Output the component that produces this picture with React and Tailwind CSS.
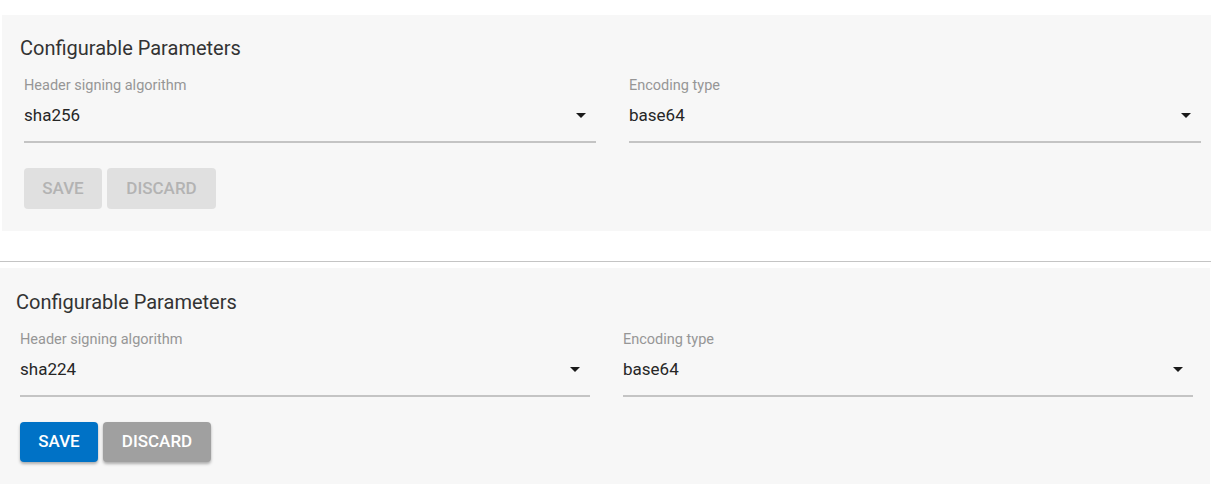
import React from 'react';

function Arrow() {
    return (
        <svg width="10" height="5" viewBox="0 0 10 5" className="mr-[10px] shrink-0">
            <path d="M0 0h10L5 5z" fill="#1a1a1a" />
        </svg>
    );
}

function SelectField({ label, value, width }) {
    return (
        <div className={`flex flex-col ${width}`}>
            <span className="text-[14.5px] leading-[20px] text-[#969696]">{label}</span>
            <div className="mt-[7px] flex items-center justify-between pb-[14px] border-b-2 border-[#c4c4c4]">
                <span className="text-[17px] leading-[24px] text-[#262626]">{value}</span>
                <Arrow />
            </div>
        </div>
    );
}

function Panel({ algo, active, className, titlePad, bodyPad, fieldW }) {
    return (
        <div className={`bg-[#f7f7f7] pb-[22px] ${className}`}>
            <h2 className={`${titlePad} text-[20px] leading-[24px] text-[#333333] font-normal`}>
                Configurable Parameters
            </h2>
            <div className={bodyPad}>
                <div className="mt-[16px] flex gap-[33px]">
                    <SelectField label="Header signing algorithm" value={algo} width={fieldW} />
                    <SelectField label="Encoding type" value="base64" width={fieldW} />
                </div>
                <div className="mt-[25px] flex gap-[5px]">
                    {active ? (
                        <>
                            <button className="h-[40px] w-[78px] rounded-[4px] bg-[#0072c6] text-white text-[17px] font-medium uppercase shadow-[0_2px_3px_rgba(0,0,0,0.3)]">
                                Save
                            </button>
                            <button className="h-[40px] w-[108px] rounded-[4px] bg-[#a0a0a0] text-white text-[17px] font-medium uppercase shadow-[0_2px_3px_rgba(0,0,0,0.3)]">
                                Discard
                            </button>
                        </>
                    ) : (
                        <>
                            <button disabled className="h-[41px] w-[78px] rounded-[4px] bg-[#e0e0e0] text-[#b3b3b3] text-[17px] font-medium uppercase">
                                Save
                            </button>
                            <button disabled className="h-[41px] w-[109px] rounded-[4px] bg-[#e0e0e0] text-[#b3b3b3] text-[17px] font-medium uppercase">
                                Discard
                            </button>
                        </>
                    )}
                </div>
            </div>
        </div>
    );
}

export default function App() {
    return (
        <div className="w-[1211px] h-[494px] bg-white overflow-hidden" style={{ fontFamily: 'Roboto, "Liberation Sans", sans-serif' }}>
            <Panel
                algo="sha256"
                className="mt-[15px] ml-[2px] pt-[21px]"
                titlePad="pl-[18px]"
                bodyPad="pl-[22px]"
                fieldW="w-[572px]"
            />
            <div className="mt-[30px] border-t border-[#c4c4c4]" />
            <Panel
                algo="sha224"
                active
                className="mt-[6px] mr-[1px] pt-[22px]"
                titlePad="pl-[16px]"
                bodyPad="pl-[20px]"
                fieldW="w-[570px]"
            />
        </div>
    );
}
